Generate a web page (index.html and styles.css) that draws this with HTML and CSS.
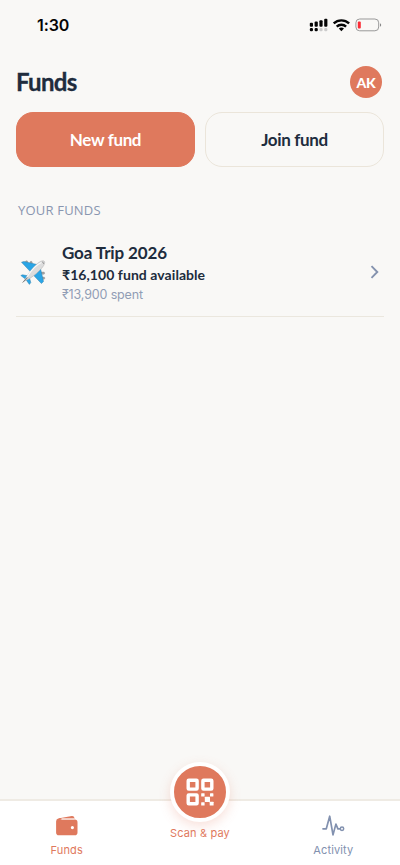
FILE: index.html
```html
<!DOCTYPE html>
<html lang="en">
<head>
<meta charset="utf-8">
<meta name="viewport" content="width=device-width, initial-scale=1">
<title>Funds</title>
<link rel="stylesheet" href="styles.css">
</head>
<body>
<div class="app">
  <div class="status">
    <span class="time">1:30</span>
    <svg class="status-icons" width="74" height="16" viewBox="0 0 74 16">
      <g fill="#050505">
        <rect x="1.8" y="5.7" width="3.2" height="4" rx="1"/><rect x="6.6" y="4.6" width="3.2" height="5.1" rx="1"/>
        <rect x="11.4" y="3.2" width="3.2" height="6.5" rx="1"/><rect x="16.2" y="1.8" width="3.2" height="7.9" rx="1"/>
        <rect x="1.8" y="11" width="3.2" height="3.2" rx="1.2"/><rect x="6.6" y="11" width="3.2" height="3.2" rx="1.2"/>
      </g>
      <g fill="#ccc"><rect x="11.4" y="11" width="3.2" height="3.2" rx="1.2"/><rect x="16.2" y="11" width="3.2" height="3.2" rx="1.2"/></g>
      <g fill="none" stroke="#050505" stroke-width="2.4">
        <path d="M25.7 6.4a11.2 11.2 0 0 1 15.4 0"/><path d="M28.700 9.600a6.800 6.800 0 0 1 9.400 0"/>
      </g>
      <path d="M30.800 11.600a4 4 0 0 1 5.200 0L33.400 14.200z" fill="#050505"/>
      <rect x="47.900" y="2" width="22.800" height="11.800" rx="3.800" fill="none" stroke="#999"/>
      <rect x="49.800" y="4.500" width="3" height="7" rx="1" fill="#fb2c36"/>
      <path d="M72 6.200v3.600q1.200-.5 1.200-1.800T72 6.200" fill="#888"/>
    </svg>
  </div>
  <header class="header">
    <h1>Funds</h1>
    <div class="avatar"><span>AK</span></div>
  </header>
  <div class="actions">
    <button class="btn primary">New fund</button>
    <button class="btn">Join fund</button>
  </div>
  <h2>YOUR FUNDS</h2>
  <div class="fund">
    <svg class="plane" width="26" height="26" viewBox="0 0 26 26">
      <g fill="#a5a4a4" stroke="#777" stroke-width=".3"><rect x="5.500" y="1.700" width="2.200" height="4" rx="1"/><rect x="10" y="2.300" width="2.200" height="4" rx="1"/><rect x="20.800" y="13" width="3.800" height="2.300" rx="1"/><rect x="21" y="18" width="3.800" height="2.300" rx="1"/></g>
      <path d="M1.500 3.200 4 2.500 17 5.500 10.500 12.800z" fill="#2aa5e6" stroke="#3582ad" stroke-width=".5"/>
      <path d="M12.500 15.200 20.500 9.500 23.500 22.500 21.400 24.500z" fill="#2aa5e6" stroke="#3582ad" stroke-width=".5"/>
      <path d="M.8 16.500 2.600 15.800 9 17 6 20.500zM5.800 20.500 9 17.200 10.800 23.500 9.400 25.400z" fill="#2aa5e6" stroke="#3582ad" stroke-width=".5"/>
      <path d="M3.800 22.200C7 17 13.500 6 20.500 2.400c2.200-1 4.300-.8 4.200 1.200-.3 3.600-5.200 8-8.200 10.800-4 3.600-8.600 6.400-12.700 7.800z" fill="#dcdcdc" stroke="#aaa" stroke-width=".5"/>
      <path d="M7 18C11 11.500 16.500 5.600 21.500 3.500" fill="none" stroke="#fafafa" stroke-width="1.200"/>
      <path d="m22.300 3 1.700 1.600" stroke="#666" stroke-width=".8"/>
      <path d="m2.700 23.500 5-5" stroke="#777"/>
    </svg>
    <div class="info">
      <div class="name">Goa Trip 2026</div>
      <div class="avail">₹16,100 fund available</div>
      <div class="spent">₹13,900 spent</div>
    </div>
    <svg class="chev" width="10" height="14" viewBox="0 0 10 14"><path d="m1.500 1.200 5.800 5.800-5.800 5.800" fill="none" stroke="#8492ae" stroke-width="1.900"/></svg>
  </div>
  <nav class="nav">
    <a class="tab active">
      <svg width="24" height="24" viewBox="0 0 24 24"><path fill="currentColor" d="M4.300 4.200 16.800 2.100q2.200-.3 2.700 2v.6H6.800q-1.600 0-3.100.7.100-.7.600-1.200z"/><path fill="currentColor" fill-rule="evenodd" d="M4.500 5.600h15.200a2.800 2.800 0 0 1 2.800 2.800v10a2.800 2.800 0 0 1-2.800 2.800H3.900A2.800 2.800 0 0 1 1.100 18.400V7.600Q1.100 5.200 3.200 4.500L6.500 4v1.200zM17.400 12a1.600 1.600 0 1 0 0 3.200 1.600 1.600 0 0 0 0-3.200z"/><path d="M6.500 4.900 19.500 4.900" stroke="#fff" stroke-width=".8"/></svg>
      <span class="t-funds">Funds</span>
    </a>
    <a class="tab scan">
      <span class="fab"><svg width="28" height="28" viewBox="0 0 28 28">
        <g fill="none" stroke="#fff" stroke-width="3.400"><rect x="2.200" y="2.200" width="8.900" height="8.900" rx=".6"/><rect x="16.900" y="2.200" width="8.900" height="8.900" rx=".6"/><rect x="2.200" y="16.900" width="8.900" height="8.900" rx=".6"/></g>
        <g fill="#fff"><rect x="15.200" y="15.200" width="3.400" height="3.400" rx=".5"/><rect x="24" y="15.200" width="3.400" height="3.400" rx=".5"/><rect x="18.800" y="18.800" width="5.200" height="5.200" rx=".5"/><rect x="15.200" y="24.200" width="3.400" height="3.400" rx=".5"/><rect x="23.700" y="23.700" width="3.900" height="3.900" rx=".5"/></g>
      </svg></span>
      <span>Scan &amp; pay</span>
    </a>
    <a class="tab">
      <svg width="24" height="24" viewBox="0 0 24 24"><path d="M2 14.800h3.300L8.700 2.200 12 20.900l2.900-10.800 2 4.700h1.800" fill="none" stroke="currentColor" stroke-width="1.700" stroke-linejoin="round" stroke-linecap="round"/><circle cx="21" cy="14.800" r="1.700" fill="none" stroke="currentColor" stroke-width="1.500"/></svg>
      <span>Activity</span>
    </a>
  </nav>
</div>
</body>
</html>
```
FILE: styles.css
```css
* { box-sizing: border-box; }
body { margin: 0; background: #f9f8f6; color: #202c3d; font-family: Lato, "Noto Sans", sans-serif; }
.app { width: 400px; height: 865px; display: flex; flex-direction: column; overflow: hidden; }
.status { height: 50px; padding: 0 18px 0 37px; display: flex; align-items: center; justify-content: space-between; }
.time { font: 600 16px/20px Inter, sans-serif; color: #050505; letter-spacing: -.1px; }
.header { height: 62px; padding: 2px 18px 0 16px; display: flex; align-items: center; justify-content: space-between; }
h1 { margin: 0; font-size: 24px; line-height: 30px; font-weight: 700; letter-spacing: -.7px; -webkit-text-stroke: .3px; }
.avatar { width: 32px; height: 32px; border-radius: 50%; background: #df795d; color: #fff; display: grid; place-items: center; font-size: 14px; font-weight: 900; letter-spacing: -.2px; }
.actions { padding: 0 16px; display: grid; grid-template-columns: 1fr 1fr; gap: 10px; height: 55px; }
.btn { border: 1px solid #ebe5da; border-radius: 17px; background: transparent; color: #202c3d; font: 700 17px/20px Lato, sans-serif; letter-spacing: -.35px; padding: 0; }
.btn.primary { background: #df795d; border-color: #df795d; color: #fff; }
h2 { margin: 34px 0 0 18px; font: 400 13px/18px "Open Sans", sans-serif; letter-spacing: .2px; color: #8996b0; }
.fund { margin: 16px 16px 0; height: 82px; padding: 0 4px; border-bottom: 1px solid #ebe7de; display: flex; align-items: flex-start; }
.plane { margin-top: 24px; }
.info { margin: 6px 0 0 16px; flex: 1; }
.name { font-size: 17px; line-height: 24px; font-weight: 700; letter-spacing: -.12px; }
.avail { font-size: 14px; line-height: 20px; font-weight: 700; letter-spacing: .06px; }
.spent { font-family: Inter, sans-serif; font-size: 12.5px; line-height: 19px; letter-spacing: -.15px; color: #919db5; }
.chev { margin: 30px 0 0; }
.nav { margin-top: auto; height: 66px; background: #fff; border-top: 2px solid #efebe4; display: grid; grid-template-columns: repeat(3, 1fr); }
.tab { display: flex; flex-direction: column; align-items: center; padding-top: 13px; font: 400 11px/16px Inter, sans-serif; letter-spacing: .15px; color: #8291af; gap: 4px; }
.tab.active, .tab.scan { color: #df795d; }
.scan { padding: 0; margin-top: -39px; gap: 3px; }
.fab { width: 60px; height: 60px; flex: none; border: 4px solid #fff; border-radius: 50%; background: #df795d; display: grid; place-items: center; box-shadow: 0 4px 12px rgba(223,121,93,.23); }
```
